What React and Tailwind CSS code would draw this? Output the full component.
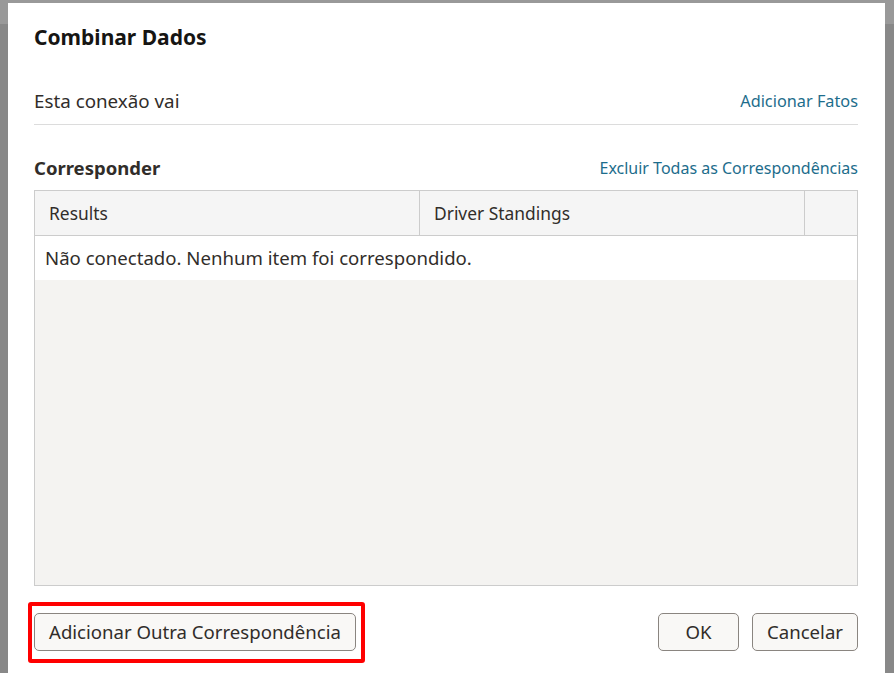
export default function App() {
  const font = { fontFamily: '"Noto Sans", "Open Sans", sans-serif' }
  return (
    <div className="relative h-[673px] w-[894px] overflow-hidden bg-[#888888]" style={font}>
      <div className="h-[24px] bg-[#999999]" />
      <div className="absolute left-[8px] top-[3px] flex h-[690px] w-[877px] flex-col bg-white pl-[26px] pr-[27px] pt-[21px]">
        <h1 className="text-[21px] font-bold leading-[26px] text-[#161513]">Combinar Dados</h1>

        <div className="mt-[39px] flex items-center justify-between border-b border-[#dcdcdc] pb-[11px]">
          <p className="text-[18.8px] leading-[24px] text-[#312d2a]">Esta conexão vai</p>
          <a className="text-[16.3px] leading-[24px] text-[#1d6d8c]">Adicionar Fatos</a>
        </div>

        <div className="mt-[31px] flex items-center justify-between">
          <h2 className="text-[18.5px] font-bold leading-[24px] text-[#312d2a]">Corresponder</h2>
          <a className="text-[16px] leading-[24px] text-[#1d6d8c]">Excluir Todas as Correspondências</a>
        </div>

        <div className="mt-[10px] flex h-[396px] flex-col border border-[#cccccc] bg-[#f4f3f1]">
          <div className="flex h-[45px] border-b border-[#cccccc] bg-[#f5f5f5] text-[17.4px] text-[#312d2a]">
            <div className="flex w-[385px] items-center border-r border-[#cccccc] px-[14px]">Results</div>
            <div className="flex w-[385px] items-center border-r border-[#cccccc] px-[14px]">Driver Standings</div>
            <div className="flex-1" />
          </div>
          <div className="flex h-[44px] items-center bg-white px-[10px] text-[18.6px] text-[#312d2a]">
            Não conectado. Nenhum item foi correspondido.
          </div>
        </div>

        <div className="mt-[16px] flex items-start justify-between">
          <div className="-ml-[6px] rounded-[3px] border-[4px] border-[#ff0000] pb-[8px] pl-[2px] pr-[5px] pt-[7px]">
            <button className="h-[38px] rounded-[5px] border border-[#8a8580] bg-[#f9f8f6] px-[14px] text-[18.6px] text-[#312d2a]">
              Adicionar Outra Correspondência
            </button>
          </div>
          <div className="mt-[11px] flex gap-[13px]">
            <button className="h-[38px] w-[81px] rounded-[5px] border border-[#8a8580] bg-[#f9f8f6] text-[18.6px] text-[#312d2a]">OK</button>
            <button className="h-[38px] w-[106px] rounded-[5px] border border-[#8a8580] bg-[#f9f8f6] text-[18.6px] text-[#312d2a]">Cancelar</button>
          </div>
        </div>
      </div>
    </div>
  )
}
